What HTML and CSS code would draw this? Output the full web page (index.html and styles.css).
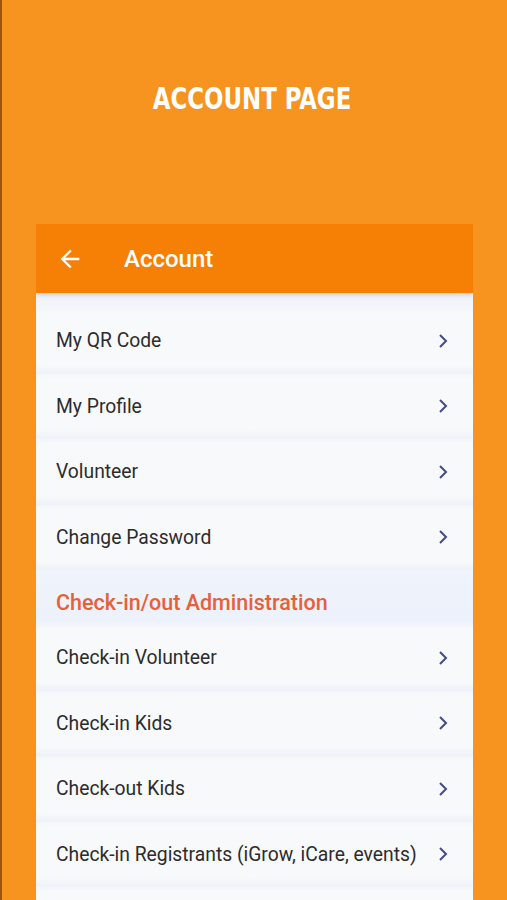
FILE: index.html
```html
<!DOCTYPE html>
<html lang="en">
<head>
    <meta charset="UTF-8">
    <meta name="viewport" content="width=device-width, initial-scale=1.0">
    <title>Account Page</title>
    <link rel="stylesheet" href="styles.css">
</head>
<body>
    <header class="banner">
        <h1 class="banner-title"><span>ACCOUNT PAGE</span></h1>
    </header>

    <div class="phone">
        <div class="app-bar">
            <svg class="back-icon" viewBox="0 0 24 24" aria-hidden="true">
                <path d="M20 11H7.83l5.59-5.59L12 4l-8 8 8 8 1.41-1.41L7.83 13H20v-2z"/>
            </svg>
            <span class="app-title">Account</span>
        </div>

        <ul class="menu">
            <li class="menu-item">My QR Code <svg class="chevron" viewBox="0 0 10 16"><path d="M2 2l6 6-6 6"/></svg></li>
            <li class="menu-item">My Profile <svg class="chevron" viewBox="0 0 10 16"><path d="M2 2l6 6-6 6"/></svg></li>
            <li class="menu-item">Volunteer <svg class="chevron" viewBox="0 0 10 16"><path d="M2 2l6 6-6 6"/></svg></li>
            <li class="menu-item">Change Password <svg class="chevron" viewBox="0 0 10 16"><path d="M2 2l6 6-6 6"/></svg></li>
            <li class="menu-section">Check-in/out Administration</li>
            <li class="menu-item">Check-in Volunteer <svg class="chevron" viewBox="0 0 10 16"><path d="M2 2l6 6-6 6"/></svg></li>
            <li class="menu-item">Check-in Kids <svg class="chevron" viewBox="0 0 10 16"><path d="M2 2l6 6-6 6"/></svg></li>
            <li class="menu-item">Check-out Kids <svg class="chevron" viewBox="0 0 10 16"><path d="M2 2l6 6-6 6"/></svg></li>
            <li class="menu-item">Check-in Registrants (iGrow, iCare, events) <svg class="chevron" viewBox="0 0 10 16"><path d="M2 2l6 6-6 6"/></svg></li>
            <li class="menu-item"></li>
        </ul>
    </div>
</body>
</html>
```

FILE: styles.css
```css
:root {
    --bg-color: #f7931f;
    --bar-color: #f67f06;
    --row-bg: #f8f9fb;
    --band-color: #eef1f9;
    --text-color: #2c2c2e;
    --accent-color: #e6603a;
    --chevron-color: #434c84;
}

html, body {
    margin: 0;
    padding: 0;
}

body {
    font-family: Roboto, 'Noto Sans', sans-serif;
    background-color: var(--bg-color);
    border-left: 2px solid #9a560f;
    height: 900px;
    overflow: hidden;
    box-sizing: border-box;
}

.banner {
    height: 224px;
    display: flex;
    justify-content: center;
    padding-top: 84px;
    box-sizing: border-box;
}

.banner-title {
    margin: 0 4px 0 0;
    color: #ffffff;
    font-family: 'DejaVu Sans Condensed', 'DejaVu Sans', sans-serif;
    font-weight: bold;
    font-size: 31px;
    line-height: 28px;
}

.banner-title span {
    display: inline-block;
    transform: scaleX(0.82);
}

.phone {
    margin: 0 34px;
    height: 676px;
    overflow: hidden;
    background-color: var(--row-bg);
}

.app-bar {
    height: 69px;
    background-color: var(--bar-color);
    display: flex;
    align-items: center;
    padding-left: 20px;
    box-shadow: 0 2px 4px rgba(0, 0, 0, 0.15);
    position: relative;
}

.back-icon {
    width: 28px;
    height: 28px;
    fill: #ffffff;
}

.app-title {
    margin-left: 40px;
    color: #ffffff;
    font-size: 24px;
    font-weight: 500;
}

.menu {
    list-style: none;
    margin: 0;
    padding: 15px 0 0;
    background: linear-gradient(#eef1f8, #f4f6fb 15px);
}

.menu-item {
    height: 65.5px;
    display: flex;
    align-items: center;
    justify-content: space-between;
    padding: 0 25px 0 20px;
    font-size: 19.3px;
    color: var(--text-color);
    background: linear-gradient(#f3f5fa, var(--row-bg) 5px, var(--row-bg) calc(100% - 9px), var(--band-color));
}

.menu-section {
    height: 55px;
    padding: 20px 20px 0;
    box-sizing: border-box;
    font-size: 21.5px;
    font-weight: 500;
    color: var(--accent-color);
    background: linear-gradient(#f0f4fc, #ecf1fb calc(100% - 6px), #f1f4fa);
}

.chevron {
    width: 10px;
    height: 16px;
    fill: none;
    stroke: var(--chevron-color);
    stroke-width: 2;
}
```
